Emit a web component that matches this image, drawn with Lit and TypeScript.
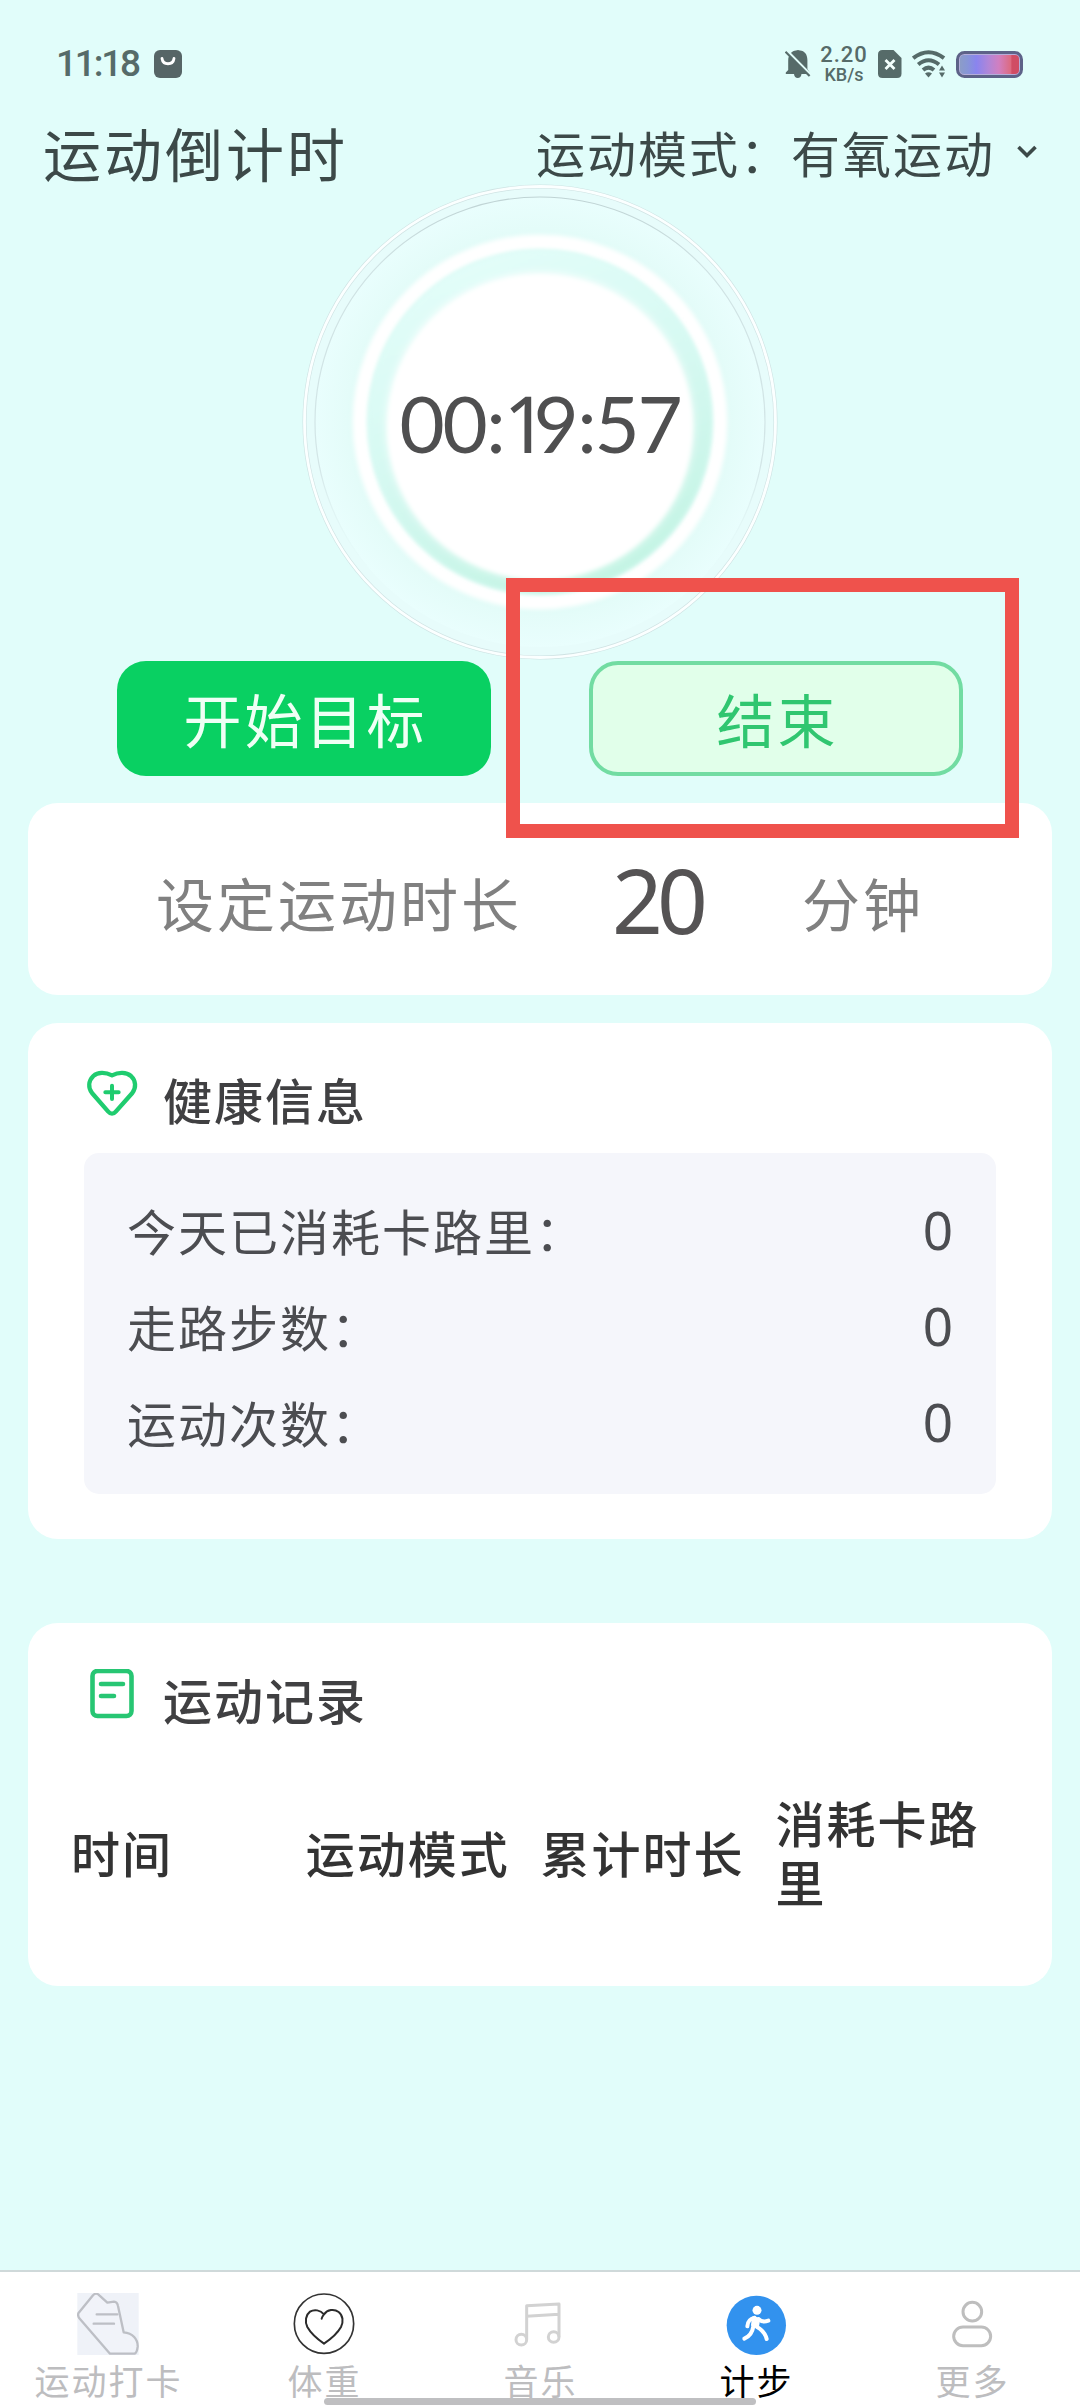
import { LitElement, html, css } from "lit";
import { customElement, property, state } from "lit/decorators.js";

const NAV = [
  { id: "checkin", label: "运动打卡" },
  { id: "weight", label: "体重" },
  { id: "music", label: "音乐" },
  { id: "steps", label: "计步" },
  { id: "more", label: "更多" },
];

const STATS = [
  { label: "今天已消耗卡路里：", value: 0 },
  { label: "走路步数：", value: 0 },
  { label: "运动次数：", value: 0 },
];

const COLUMNS = ["时间", "运动模式", "累计时长", "消耗卡路里"];

const navIcon = (id: string) => {
  switch (id) {
    case "checkin":
      return html`<svg width="62" height="62" viewBox="232 129 184 186">
        <rect x="232" y="129" width="184" height="186" fill="#eff2f8" />
        <path d="M235 190 L279 136 Q288 126 298 136 L322 158 L342 155 Q352 156 354 168 L371 247 C398 249 414 268 413 290 Q411 308 404 311 L330 311 L238 205 Q233 198 235 190 Z" fill="#f1f3f9" stroke="#bdbfc5" stroke-width="7" stroke-linejoin="round" />
        <path d="M290 193 H352 M281 221 H342" stroke="#bdbfc5" stroke-width="7" stroke-linecap="round" fill="none" />
      </svg>`;
    case "weight":
      return html`<svg width="62" height="62" viewBox="879 129 186 186">
        <circle cx="972" cy="221" r="89" fill="none" stroke="#333" stroke-width="5" />
        <path d="M965 206 Q966 200 972 193 C982 178 1003 176 1016 186 C1029 196 1031 215 1023 231 C1013 249 991 268 972 281 C952 267 932 249 922 231 C914 214 917 195 930 185 C943 177 961 180 972 193" fill="none" stroke="#2b2b2b" stroke-width="6" stroke-linejoin="round" stroke-linecap="round" />
      </svg>`;
    case "music":
      return html`<svg width="62" height="62" viewBox="327 129 186 186">
        <g fill="none" stroke="#d2d2d2" stroke-width="9">
          <circle cx="364" cy="269" r="16" />
          <circle cx="461" cy="261" r="16" />
          <path d="M380 268 V167 L477 162 V260 M380 199 L477 193" stroke-linejoin="round" />
        </g>
      </svg>`;
    case "steps":
      return html`<svg width="62" height="62" viewBox="979 129 186 186">
        <circle cx="1073" cy="226" r="89" fill="#3292ee" />
        <circle cx="1075" cy="181" r="13.5" fill="#fff" />
        <path d="M1064 203 L1081 207 L1077 229 L1061 225 Z" fill="#fff" stroke="#fff" stroke-width="8" stroke-linejoin="round" />
        <g fill="none" stroke="#fff" stroke-width="12" stroke-linecap="round" stroke-linejoin="round">
          <path d="M1068 203 Q1047 208 1046 229" />
          <path d="M1080 207 Q1091 219 1109 212" />
          <path d="M1064 229 Q1060 256 1037 266" />
          <path d="M1074 230 Q1099 244 1104 267" />
        </g>
      </svg>`;
    default:
      return html`<svg width="62" height="62" viewBox="725 129 186 186">
        <g fill="none" stroke="#bebebe" stroke-width="9">
          <circle cx="819" cy="185" r="28" />
          <rect x="763" y="231" width="111" height="56" rx="28" />
        </g>
      </svg>`;
  }
};

@customElement("status-bar")
export class StatusBar extends LitElement {
  static styles = css`
    :host {
      display: flex;
      align-items: center;
      justify-content: space-between;
      height: 84px;
      box-sizing: border-box;
      padding: 44px 57px 0 56px;
      color: #566b69;
      font-family: Roboto, "Noto Sans", sans-serif;
    }
    .side {
      display: flex;
      align-items: center;
      height: 40px;
    }
    .clock {
      width: 98px;
      font-size: 37px;
      font-weight: 500;
      letter-spacing: -2.2px;
      line-height: 40px;
    }
    .speed {
      display: flex;
      flex-direction: column;
      align-items: center;
      width: 52px;
      margin: 1px 8px 0 7px;
      font-weight: 500;
    }
    .rate {
      font-size: 22px;
      line-height: 21px;
      letter-spacing: 1px;
    }
    .unit {
      font-size: 18px;
      line-height: 20px;
    }
    svg {
      display: block;
      flex: none;
    }
    .wifi {
      margin: 0 10px 0 10px;
    }
  `;

  render() {
    return html`
      <div class="side">
        <span class="clock">11:18</span>
        <svg width="28" height="28" viewBox="0 0 28 28">
          <rect width="28" height="28" rx="6" fill="#566566" />
          <path d="M8 8.5 C9 15.5 19 15.5 20 8.5" fill="none" stroke="#fff" stroke-width="2.8" stroke-linecap="round" />
        </svg>
      </div>
      <div class="side">
        <svg width="26" height="30" viewBox="0 0 26 30">
          <path d="M3.2 21 V12 C3.2 5.500 7 1.800 11 1.600 Q13 0.400 15 1.600 C19.500 2 22.400 5.500 22.400 11 V20 L25 24 V25 H16.500 Q16 29 12.700 29 Q9.500 29 9 25 H0.800 V23.500 Z" fill="#566b69" />
          <path d="M2.500 2.500 L26.500 27" stroke="#e2fdfa" stroke-width="3" />
          <path d="M0.500 2.800 L24.600 27" stroke="#566b69" stroke-width="2.200" />
        </svg>
        <div class="speed"><span class="rate">2.20</span><span class="unit">KB/s</span></div>
        <svg width="24" height="28" viewBox="0 0 24 28">
          <path d="M4.500 0 H15.500 L23.500 8 V23.500 Q23.500 28 19 28 H4.500 Q0 28 0 23.500 V4.500 Q0 0 4.500 0 Z" fill="#566b69" />
          <path d="M7.500 10 L16.500 19 M16.500 10 L7.500 19" stroke="#f3fffd" stroke-width="2.800" />
        </svg>
        <svg class="wifi" width="34" height="28" viewBox="0 0 34 28">
          <g fill="none" stroke="#566b69" stroke-width="4">
            <path d="M1.200 8.200 Q16.500 -3.800 32 8.200" />
            <path d="M6.200 14.500 Q16.500 6 27 14.500" />
            <path d="M11 20 Q16.500 15.300 22 20" />
          </g>
          <path d="M13 23.500 Q16.500 20.800 20 23.500 L16.500 27.500 Z" fill="#566b69" />
          <path d="M27 20.500 L30 15.500 L33 20.500 Z M27 22.500 L30 27.500 L33 22.500 Z" fill="#566b69" />
        </svg>
        <svg width="67" height="27" viewBox="0 0 67 27">
          <defs>
            <linearGradient id="charge">
              <stop offset="0" stop-color="#8c9cc8" />
              <stop offset="0.120" stop-color="#8796d6" />
              <stop offset="0.280" stop-color="#8a84ee" />
              <stop offset="0.480" stop-color="#b086d8" />
              <stop offset="0.660" stop-color="#d17fc0" />
              <stop offset="0.860" stop-color="#dc6a80" />
              <stop offset="0.880" stop-color="#d04c64" />
              <stop offset="1" stop-color="#d04c64" />
            </linearGradient>
          </defs>
          <rect x="1.500" y="1.500" width="64" height="24" rx="7" fill="#b4add9" stroke="#5d6288" stroke-width="3" />
          <rect x="4" y="4" width="59" height="19" rx="4" fill="url(#charge)" />
        </svg>
      </div>
    `;
  }
}

@customElement("countdown-dial")
export class CountdownDial extends LitElement {
  @property() time = "00:00:00";

  static styles = css`
    :host {
      display: grid;
      width: 476px;
      height: 476px;
      place-items: center;
    }
    .face,
    .time {
      grid-area: 1 / 1;
    }
    .time {
      display: flex;
      margin-top: 1px;
      color: #4f4f50;
      font-family: Lato, "Noto Sans", sans-serif;
      font-size: 78px;
      line-height: 90px;
      white-space: nowrap;
    }
    .digit,
    .one,
    .colon {
      display: flex;
      justify-content: center;
      width: 43px;
      letter-spacing: -2.4px;
    }
    .one {
      justify-content: flex-start;
      width: 30px;
      font-family: "Noto Sans", sans-serif;
      letter-spacing: -15px;
    }
    .colon {
      width: 18px;
      letter-spacing: -3px;
    }
  `;

  render() {
    return html`
      <svg class="face" width="476" height="476" viewBox="-238 -238 476 476">
        <defs>
          <radialGradient id="glass">
            <stop offset="0.770" stop-color="#d9faf4" />
            <stop offset="0.860" stop-color="#e4fcf9" />
            <stop offset="1" stop-color="#e9fefd" />
          </radialGradient>
          <linearGradient id="mint" x1="0.200" y1="0" x2="0.600" y2="1">
            <stop offset="0" stop-color="#e4fefa" />
            <stop offset="0.500" stop-color="#d6f9f2" />
            <stop offset="1" stop-color="#c4f4e4" />
          </linearGradient>
          <linearGradient id="inner-line" x1="0" y1="0" x2="0" y2="1">
            <stop offset="0" stop-color="#bfd3d4" />
            <stop offset="0.150" stop-color="#cfe2e3" />
            <stop offset="0.600" stop-color="#d3e6e7" />
            <stop offset="0.850" stop-color="#e4fbf9" stop-opacity="0" />
          </linearGradient>
          <filter id="soft" x="-10%" y="-10%" width="120%" height="120%">
            <feGaussianBlur stdDeviation="2" />
          </filter>
          <filter id="softer" x="-10%" y="-10%" width="120%" height="120%">
            <feGaussianBlur stdDeviation="4" />
          </filter>
        </defs>
        <circle r="236" fill="#e7fcfb" />
        <circle r="235.500" fill="none" stroke="#c9dcdd" stroke-width="4" stroke-opacity="0.800" />
        <circle r="235.500" fill="none" stroke="#fbffff" stroke-width="2.800" />
        <circle r="225" fill="url(#glass)" />
        <circle r="225" fill="none" stroke="url(#inner-line)" stroke-width="1.200" />
        <circle r="180" fill="none" stroke="#fff" stroke-width="15" filter="url(#soft)" />
        <circle r="172" fill="url(#mint)" filter="url(#soft)" />
        <circle r="153" cy="4" fill="#fff" filter="url(#softer)" />
        <circle r="152" cy="5" fill="#fff" filter="url(#soft)" />
      </svg>
      <div class="time">
        ${[...this.time].map(
          (c) => html`<span class=${c === ":" ? "colon" : c === "1" ? "one" : "digit"}>${c}</span>`
        )}
      </div>
    `;
  }
}

@customElement("app-root")
export class AppRoot extends LitElement {
  @state() private active = "steps";
  @state() private remaining = "00:19:57";

  static styles = css`
    :host {
      display: block;
      font-family: "Noto Sans CJK SC", sans-serif;
    }
    .page {
      position: relative;
      display: flex;
      flex-direction: column;
      width: 1080px;
      height: 2408px;
      overflow: hidden;
      background: #e1fdfa;
    }
    .header {
      display: flex;
      align-items: center;
      justify-content: space-between;
      height: 100px;
      box-sizing: border-box;
      padding: 35px 43px 0 43px;
      color: #3c4948;
      white-space: nowrap;
    }
    .title {
      font-size: 58px;
      letter-spacing: 3px;
      line-height: 64px;
    }
    .mode {
      display: flex;
      align-items: center;
      font-size: 49px;
      letter-spacing: 2px;
      line-height: 60px;
    }
    .chevron {
      display: block;
      margin: 0 0 0 22px;
    }
    .dial {
      align-self: center;
    }
    .actions {
      display: flex;
      justify-content: space-between;
      margin: 1px 117px 0;
    }
    .btn {
      display: flex;
      align-items: center;
      justify-content: center;
      width: 374px;
      height: 115px;
      box-sizing: border-box;
      border: 0;
      border-radius: 29px;
      padding: 0 0 2px 3px;
      font: inherit;
      font-size: 58px;
      letter-spacing: 3px;
      color: #effff5;
      background: #09d062;
    }
    .ghost {
      border: 4px solid #72dca2;
      color: #30c670;
      background: #e1ffea;
    }
    .card {
      margin: 0 28px;
      border-radius: 30px;
      background: #fff;
    }
    .duration {
      display: flex;
      align-items: center;
      height: 192px;
      margin-top: 27px;
      box-sizing: border-box;
      padding: 6px 0 0 128px;
      color: #808080;
      font-size: 58px;
      letter-spacing: 3px;
      line-height: 80px;
      white-space: nowrap;
    }
    .field {
      width: 280px;
      box-sizing: border-box;
      padding: 0 0 5px 90px;
      color: #555354;
      font-family: "Noto Sans", sans-serif;
      font-size: 89px;
      letter-spacing: -6px;
    }
    .health {
      height: 516px;
      margin-top: 28px;
    }
    .records {
      height: 363px;
      margin-top: 84px;
    }
    .head {
      display: flex;
      align-items: center;
      height: 130px;
      box-sizing: border-box;
      padding: 21px 0 0 56px;
      color: #404042;
      font-size: 49px;
      font-weight: 500;
      letter-spacing: 2px;
      line-height: 60px;
    }
    .head-icon {
      display: block;
      margin: 0 23px 10px 0;
    }
    .stats {
      margin: 0 56px;
      border-radius: 15px;
      padding: 28px 43px 25px;
      background: #f5f6fb;
      color: #4c4d51;
    }
    .stat {
      display: flex;
      align-items: center;
      justify-content: space-between;
      height: 96px;
      font-size: 49px;
      letter-spacing: 2px;
    }
    .value {
      margin-top: 1px;
      font-family: "Noto Sans", sans-serif;
      font-size: 53px;
      letter-spacing: 0;
    }
    .table-head {
      display: grid;
      grid-template-columns: repeat(4, 234.8px);
      align-items: center;
      height: 196px;
      margin-left: 43px;
      color: #333;
      font-size: 49px;
      font-weight: 500;
      letter-spacing: 2px;
      line-height: 59px;
    }
    .nav {
      display: grid;
      grid-template-columns: repeat(5, 1fr);
      height: 138px;
      box-sizing: border-box;
      margin-top: auto;
      border-top: 2px solid #cfd9da;
      background: #fff;
    }
    .tab {
      display: flex;
      flex-direction: column;
      align-items: center;
      padding-top: 21px;
      color: #bdbdbf;
      font-size: 35px;
      letter-spacing: 2px;
      line-height: 50px;
    }
    .tab-label {
      margin-left: 1px;
    }
    .tab svg {
      display: block;
    }
    .active {
      color: #000;
    }
    .home-bar {
      position: absolute;
      left: 324px;
      bottom: 3px;
      width: 432px;
      height: 7px;
      border-radius: 4px;
      background: #bfbfc1;
    }
    .highlight {
      position: absolute;
      left: 506px;
      top: 578px;
      width: 513px;
      height: 260px;
      box-sizing: border-box;
      border: 14px solid #ef524c;
    }
  `;

  render() {
    return html`
      <div class="page">
        <status-bar></status-bar>
        <header class="header">
          <span class="title">运动倒计时</span>
          <span class="mode">
            <span>运动模式：有氧运动</span>
            <svg class="chevron" width="20" height="14" viewBox="0 0 20 14">
              <path d="M1.500 2 L10 10.500 L18.500 2" fill="none" stroke="#3c4948" stroke-width="3.600" />
            </svg>
          </span>
        </header>
        <countdown-dial class="dial" .time=${this.remaining}></countdown-dial>
        <div class="actions">
          <button class="btn">开始目标</button>
          <button class="btn ghost">结束</button>
        </div>

        <section class="card duration">
          <span>设定运动时长</span>
          <span class="field">20</span>
          <span>分钟</span>
        </section>

        <section class="card health">
          <div class="head">
            <svg class="head-icon" width="56" height="50" viewBox="72 87 168 150">
              <path d="M156 106 C136 96 113 96 100 108 C85 123 84 143 96 159 L144 214 Q156 228 168 214 L217 159 C229 143 228 122 213 108 C199 96 176 96 156 106 Z" fill="none" stroke="#1fcc6f" stroke-width="13" stroke-linejoin="round" />
              <path d="M156 137 V177 M136 157 H176" stroke="#1fcc6f" stroke-width="12" stroke-linecap="round" />
            </svg>
            <span>健康信息</span>
          </div>
          <div class="stats">
            ${STATS.map(
              (s) => html`<div class="stat"><span>${s.label}</span><span class="value">${s.value}</span></div>`
            )}
          </div>
        </section>

        <section class="card records">
          <div class="head">
            <svg class="head-icon" width="56" height="50" viewBox="0 0 56 50">
              <rect x="8.500" y="2" width="39" height="45" rx="5" fill="none" stroke="#27c673" stroke-width="4.600" />
              <path d="M17 15 H39 M17 27 H30" stroke="#27c673" stroke-width="4.600" stroke-linecap="round" />
            </svg>
            <span>运动记录</span>
          </div>
          <div class="table-head">${COLUMNS.map((c) => html`<span>${c}</span>`)}</div>
        </section>

        <nav class="nav">
          ${NAV.map(
            (n) => html`<div class="tab ${n.id === this.active ? "active" : ""}" @click=${() => (this.active = n.id)}>
              ${navIcon(n.id)}<span class="tab-label">${n.label}</span>
            </div>`
          )}
        </nav>
        <div class="home-bar"></div>
        <div class="highlight"></div>
      </div>
    `;
  }
}
